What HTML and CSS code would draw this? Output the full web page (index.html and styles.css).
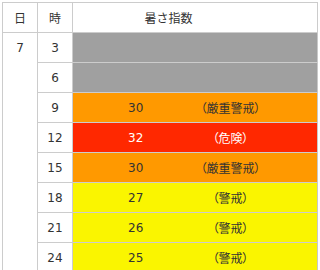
FILE: index.html
```html
<!DOCTYPE html>
<html lang="ja">
<head>
<meta charset="utf-8">
<link rel="stylesheet" href="styles.css">
</head>
<body>
<table class="wbgt">
  <colgroup>
    <col class="c-day"><col class="c-hour"><col class="c-num"><col class="c-label"><col class="c-rest">
  </colgroup>
  <thead>
    <tr>
      <th>日</th>
      <th>時</th>
      <th colspan="3" class="h-index">暑さ指数</th>
    </tr>
  </thead>
  <tbody>
    <tr>
      <td rowspan="8" class="day">7</td>
      <td class="hour">3</td>
      <td class="v lv-none"></td><td class="l lv-none"></td><td class="r lv-none"></td>
    </tr>
    <tr>
      <td class="hour">6</td>
      <td class="v lv-none"></td><td class="l lv-none"></td><td class="r lv-none"></td>
    </tr>
    <tr>
      <td class="hour">9</td>
      <td class="v lv-severe">30</td><td class="l lv-severe">（厳重警戒）</td><td class="r lv-severe"></td>
    </tr>
    <tr>
      <td class="hour">12</td>
      <td class="v lv-danger">32</td><td class="l lv-danger">（危険）</td><td class="r lv-danger"></td>
    </tr>
    <tr>
      <td class="hour">15</td>
      <td class="v lv-severe">30</td><td class="l lv-severe">（厳重警戒）</td><td class="r lv-severe"></td>
    </tr>
    <tr>
      <td class="hour">18</td>
      <td class="v lv-warn">27</td><td class="l lv-warn">（警戒）</td><td class="r lv-warn"></td>
    </tr>
    <tr>
      <td class="hour">21</td>
      <td class="v lv-warn">26</td><td class="l lv-warn">（警戒）</td><td class="r lv-warn"></td>
    </tr>
    <tr>
      <td class="hour">24</td>
      <td class="v lv-warn">25</td><td class="l lv-warn">（警戒）</td><td class="r lv-warn"></td>
    </tr>
  </tbody>
</table>
</body>
</html>
```

FILE: styles.css
```css
html, body {
  margin: 0;
  padding: 0;
  background: #ffffff;
}

body {
  padding: 2px;
  font-family: "DejaVu Sans", "Noto Sans CJK JP", sans-serif;
  font-size: 12px;
  color: #333333;
}

.wbgt {
  border-collapse: collapse;
  table-layout: fixed;
  width: 315px;
  border: 1px solid #c8c8c8;
}

.c-day { width: 35px; }
.c-hour { width: 35px; }
.c-num { width: 126px; }
.c-label { width: 64px; }
.c-rest { width: 55px; }

.wbgt th,
.wbgt td {
  height: 29px;
  padding: 0;
  text-align: center;
  vertical-align: middle;
  border: 1px solid #cccccc;
  font-weight: normal;
  white-space: nowrap;
  line-height: 16px;
}

.wbgt th {
  font-family: "Noto Sans CJK JP", sans-serif;
}

.wbgt th.h-index {
  padding-right: 53px;
}

.wbgt td.day {
  vertical-align: top;
  padding-top: 7px;
}

.wbgt td.v,
.wbgt td.l,
.wbgt td.r {
  border-left: none;
  border-right: none;
}

.wbgt td.r {
  border-right: 1px solid #c8c8c8;
}

.wbgt td.l {
  font-family: "Noto Sans CJK JP", sans-serif;
  font-feature-settings: "palt";
}

.lv-none { background: #a0a0a0; border-color: #ababab; }
.lv-severe { background: #ff9900; }
.lv-danger { background: #ff2800; color: #ffffff; }
.lv-warn { background: #faf500; }
```
